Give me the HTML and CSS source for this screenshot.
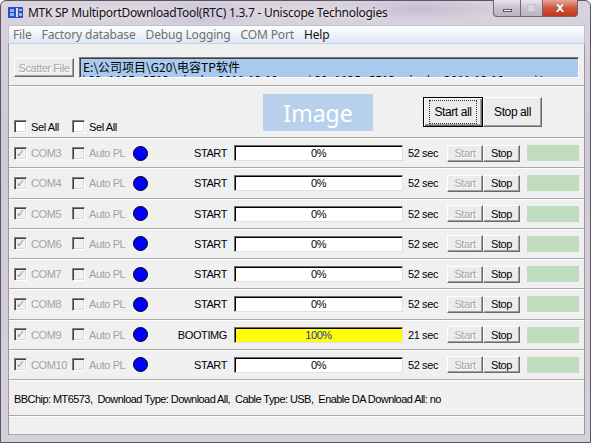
FILE: index.html
```html
<!DOCTYPE html>
<html>
<head>
<meta charset="utf-8">
<link rel="stylesheet" href="styles.css">
</head>
<body>
<div class="window">
  <div class="titlebar">
    <svg class="appicon" width="15" height="13" viewBox="0 0 15 13">
      <rect x="0" y="1" width="15" height="11" rx="1" fill="#2c4fb8"/>
      <rect x="2" y="3" width="4" height="3" fill="#8fb4ff"/>
      <rect x="2" y="7" width="4" height="3" fill="#8fb4ff"/>
      <rect x="8" y="2" width="2" height="9" fill="#cfe0ff"/>
      <rect x="11" y="3" width="3" height="2" fill="#8fb4ff"/>
      <rect x="11" y="7" width="3" height="3" fill="#8fb4ff"/>
    </svg>
    <span class="title">MTK SP MultiportDownloadTool(RTC) 1.3.7 - Uniscope Technologies</span>
    <div class="wbtns">
      <div class="wbtn min"><span class="minbar"></span></div>
      <div class="wbtn max"><span class="maxbox"></span></div>
      <div class="wbtn close"><span class="x">X</span></div>
    </div>
  </div>
  <div class="body">
    <div class="menubar">
      <span class="mi dis">File</span>
      <span class="mi dis">Factory database</span>
      <span class="mi dis">Debug Logging</span>
      <span class="mi dis">COM Port</span>
      <span class="mi">Help</span>
    </div>
    <div class="client">
      <div class="scatter">
        <div class="btn disabled scatterbtn">Scatter File</div>
        <div class="pathbox">
          <div class="pl">E:\公司项目\G20\电容TP软件</div>
          <div class="pl">\S0_1125_C512_ninglu_2011.12.10_user\S0_1125_C512_ninglu_2011.12.10_user\Images\MT6573_Android_scatter_emmc.txt</div>
        </div>
      </div>
      <div class="header">
        <label class="hcb"><span class="cb"></span><span>Sel All</span></label>
        <label class="hcb"><span class="cb"></span><span>Sel All</span></label>
        <div class="imagebox">Image</div>
        <div class="btn defbtn"><span class="focus">Start all</span></div>
        <div class="btn stopall">Stop all</div>
      </div>
      <div class="rows">
        <div class="row">
          <div class="c1"><span class="cb dis checked">✓</span><span class="g">COM3</span></div>
          <div class="c2"><span class="cb dis"></span><span class="g">Auto PL</span></div>
          <span class="dot"></span>
          <span class="st">START</span>
          <div class="prog"><span>0%</span></div>
          <span class="sec">52 sec</span>
          <div class="btn sm disabled">Start</div>
          <div class="btn sm">Stop</div>
          <div class="green"></div>
        </div>
        <div class="row">
          <div class="c1"><span class="cb dis checked">✓</span><span class="g">COM4</span></div>
          <div class="c2"><span class="cb dis"></span><span class="g">Auto PL</span></div>
          <span class="dot"></span>
          <span class="st">START</span>
          <div class="prog"><span>0%</span></div>
          <span class="sec">52 sec</span>
          <div class="btn sm disabled">Start</div>
          <div class="btn sm">Stop</div>
          <div class="green"></div>
        </div>
        <div class="row">
          <div class="c1"><span class="cb dis checked">✓</span><span class="g">COM5</span></div>
          <div class="c2"><span class="cb dis"></span><span class="g">Auto PL</span></div>
          <span class="dot"></span>
          <span class="st">START</span>
          <div class="prog"><span>0%</span></div>
          <span class="sec">52 sec</span>
          <div class="btn sm disabled">Start</div>
          <div class="btn sm">Stop</div>
          <div class="green"></div>
        </div>
        <div class="row">
          <div class="c1"><span class="cb dis checked">✓</span><span class="g">COM6</span></div>
          <div class="c2"><span class="cb dis"></span><span class="g">Auto PL</span></div>
          <span class="dot"></span>
          <span class="st">START</span>
          <div class="prog"><span>0%</span></div>
          <span class="sec">52 sec</span>
          <div class="btn sm disabled">Start</div>
          <div class="btn sm">Stop</div>
          <div class="green"></div>
        </div>
        <div class="row">
          <div class="c1"><span class="cb dis checked">✓</span><span class="g">COM7</span></div>
          <div class="c2"><span class="cb dis"></span><span class="g">Auto PL</span></div>
          <span class="dot"></span>
          <span class="st">START</span>
          <div class="prog"><span>0%</span></div>
          <span class="sec">52 sec</span>
          <div class="btn sm disabled">Start</div>
          <div class="btn sm">Stop</div>
          <div class="green"></div>
        </div>
        <div class="row">
          <div class="c1"><span class="cb dis checked">✓</span><span class="g">COM8</span></div>
          <div class="c2"><span class="cb dis"></span><span class="g">Auto PL</span></div>
          <span class="dot"></span>
          <span class="st">START</span>
          <div class="prog"><span>0%</span></div>
          <span class="sec">52 sec</span>
          <div class="btn sm disabled">Start</div>
          <div class="btn sm">Stop</div>
          <div class="green"></div>
        </div>
        <div class="row">
          <div class="c1"><span class="cb dis checked">✓</span><span class="g">COM9</span></div>
          <div class="c2"><span class="cb dis"></span><span class="g">Auto PL</span></div>
          <span class="dot"></span>
          <span class="st">BOOTIMG</span>
          <div class="prog full"><span>100%</span></div>
          <span class="sec">21 sec</span>
          <div class="btn sm disabled">Start</div>
          <div class="btn sm">Stop</div>
          <div class="green"></div>
        </div>
        <div class="row">
          <div class="c1"><span class="cb dis checked">✓</span><span class="g">COM10</span></div>
          <div class="c2"><span class="cb dis"></span><span class="g">Auto PL</span></div>
          <span class="dot"></span>
          <span class="st">START</span>
          <div class="prog"><span>0%</span></div>
          <span class="sec">52 sec</span>
          <div class="btn sm disabled">Start</div>
          <div class="btn sm">Stop</div>
          <div class="green"></div>
        </div>
      </div>
      <div class="info">BBChip: MT6573,&nbsp; Download Type: Download All,&nbsp; Cable Type: USB,&nbsp; Enable DA Download All: no</div>
      <div class="statusbar"></div>
    </div>
  </div>
</div>
</body>
</html>
```
FILE: styles.css
```css
* { box-sizing: border-box; }
html, body { margin: 0; padding: 0; }
body {
  width: 591px; height: 443px; overflow: hidden;
  font-family: "Liberation Sans", Arial, sans-serif;
  background: #fff;
}
.window {
  width: 591px; height: 443px;
  background:
    radial-gradient(ellipse 60px 14px at 200px 12px, rgba(150,140,200,0.35), transparent),
    radial-gradient(ellipse 90px 12px at 420px 8px, rgba(170,150,190,0.35), transparent),
    linear-gradient(180deg, #d9d3de 0%, #cfc8d6 30%, #d6d0da 100%);
  border: 1px solid #5a5560;
  border-radius: 6px 6px 0 0;
  display: flex; flex-direction: column;
}
.titlebar {
  height: 24px; flex: none;
  display: flex; align-items: center;
  padding-left: 7px;
  padding-bottom: 2px;
  position: relative;
}
.appicon { flex: none; margin-top: 1px; }
.title {
  margin-left: 5px;
  font-family: "Noto Sans", "Open Sans", sans-serif;
  font-size: 12px; color: #111;
  text-shadow: 0 0 6px rgba(255,255,255,0.9);
  letter-spacing: -0.27px;
}
.wbtns {
  position: absolute; right: 12px; top: -1px;
  display: flex;
}
.wbtn {
  height: 17px;
  border: 1px solid #6e6878;
  border-top: none;
  display: flex; align-items: center; justify-content: center;
}
.wbtn.min {
  width: 28px; border-radius: 0 0 0 4px;
  background: linear-gradient(180deg, #e8e4ec, #c9c3d1 50%, #b9b3c3);
}
.wbtn.max {
  width: 22px; border-left: none;
  background: linear-gradient(180deg, #e8e4ec, #c9c3d1 50%, #b9b3c3);
}
.wbtn.close {
  width: 35px; border-left: none; border-radius: 0 0 4px 0;
  background: linear-gradient(180deg, #e9a99a, #d0553d 50%, #c2351f);
}
.minbar { width: 9px; height: 3px; background: #fff; border: 1px solid #555; margin-top: 4px; }
.maxbox { width: 9px; height: 8px; border: 1px solid #c8c0cc; background: #d8d2dc; }
.x {
  color: #fff; font-family: "DejaVu Sans", sans-serif; font-weight: bold;
  font-size: 11px; text-shadow: 0 0 1px #444;
}
.body {
  flex: 1; display: flex; flex-direction: column;
  padding: 0 5px 7px 7px;
}
.menubar {
  height: 19px; flex: none;
  background: linear-gradient(180deg, #ffffff, #eef3fa 50%, #dde7f3);
  border: 1px solid #b9c4d2;
  border-bottom: 1px solid #c9d4e2;
  display: flex; align-items: center;
  padding-left: 4px;
  font-family: "Noto Sans", "Open Sans", sans-serif;
  font-size: 12px;
  letter-spacing: -0.15px;
}
.mi { margin-right: 10px; color: #111; }
.mi.dis { color: #707070; }
.client {
  flex: 1;
  background: #f0f0f0;
  border-left: 1px solid #9c97a2;
  border-right: 1px solid #9c97a2;
  display: flex; flex-direction: column;
  font-size: 11px; letter-spacing: -0.4px;
}
.scatter {
  height: 42px; flex: none;
  display: flex; align-items: flex-start;
  padding: 13px 0 0 5px;
  border-bottom: 1px solid #a9a9a9;
  box-shadow: 0 1px 0 #fff;
}
.btn {
  background: #ececec;
  border: 1px solid;
  border-color: #fff #6a6a6a #6a6a6a #fff;
  box-shadow: inset -1px -1px 0 #a0a0a0;
  display: flex; align-items: center; justify-content: center;
  color: #000;
  white-space: nowrap;
}
.btn.disabled { color: #a6a6a6; text-shadow: 1px 1px 0 #fff; }
.scatterbtn { width: 60px; height: 19px; margin-top: 1px; }
.pathbox {
  margin-left: 5px;
  width: 500px; height: 21px;
  background: #a7caee;
  border: 1px solid;
  border-color: #7a7a7a #fff #fff #7a7a7a;
  box-shadow: inset 1px 1px 0 #404040;
  overflow: hidden;
  padding: 2px 0 0 3px;
  font-family: "Noto Sans CJK SC", "Liberation Sans", sans-serif;
  font-size: 12px; letter-spacing: 0;
  line-height: 13px;
  color: #000;
}
.pl { white-space: nowrap; }
.header {
  height: 52px; flex: none;
  display: flex; align-items: flex-start;
  padding-left: 5px;
  border-bottom: 1px solid #a9a9a9;
}
.hcb {
  display: flex; align-items: center;
  margin-top: 34px;
  width: 58px;
  color: #000;
}
.cb {
  width: 13px; height: 13px; flex: none;
  background: #fff;
  border: 1px solid;
  border-color: #808080 #fff #fff #808080;
  box-shadow: inset 1px 1px 0 #404040, inset -1px -1px 0 #dcdcdc;
  margin-right: 4px;
  font-size: 11px; line-height: 11px; text-align: center;
  color: #999; font-family: "DejaVu Sans", sans-serif; letter-spacing: 0;
  font-weight: bold;
}
.cb.dis { background: #f0f0f0; }
.imagebox {
  margin-left: 133px; margin-top: 8px;
  width: 110px; height: 37px;
  background: #b7d1ed;
  color: #fff;
  font-family: "Noto Sans", "Open Sans", sans-serif;
  font-size: 23px; letter-spacing: 0;
  display: flex; align-items: center; justify-content: center;
}
.defbtn {
  margin-left: 50px; margin-top: 11px;
  width: 60px; height: 30px;
  border: 1px solid #000;
  box-shadow: inset 1px 1px 0 #fff, inset -1px -1px 0 #6a6a6a, inset -2px -2px 0 #a0a0a0;
  font-size: 12px;
}
.focus { border: 1px dotted #333; padding: 4px 4px; }
.stopall {
  margin-top: 11px;
  width: 59px; height: 30px;
  font-size: 12px;
}
.rows { flex: none; }
.row {
  height: 30.25px;
  display: grid;
  grid-template-columns: 58px 61px 15px 79px 176px 44px 36px 37px 59px;
  column-gap: 0;
  align-items: center;
  padding-left: 5px;
  border-top: 1px solid #fff;
  border-bottom: 1px solid #a9a9a9;
}
.c1, .c2 { display: flex; align-items: center; }
.g { color: #a3a3a3; }
.dot {
  width: 15px; height: 15px;
  border-radius: 50%;
  background: #0000ff;
  border: 1px solid #000;
}
.st { text-align: right; color: #000; }
.prog {
  margin-left: 7px;
  height: 16px;
  background: #fff;
  border: 1px solid;
  border-color: #6d6d6d #e0e0e0 #e0e0e0 #6d6d6d;
  box-shadow: inset 1px 1px 0 #000;
  display: flex; align-items: center; justify-content: center;
  color: #000;
  width: 169px;
}
.prog.full { background: #ffff00; color: #1a2fc8; }
.sec { padding-left: 5px; color: #000; }
.btn.sm { height: 17px; margin-top: 0; }
.green {
  margin-left: 7px;
  width: 52px; height: 16px;
  background: #bfdcbf;
}
.info {
  height: 36px; flex: none;
  display: flex; align-items: center;
  padding-left: 5px;
  padding-top: 2px;
  border-top: 1px solid #fff;
  border-bottom: 1px solid #a9a9a9;
  color: #000;
  letter-spacing: -0.56px;
}
.statusbar {
  flex: 1;
  border-top: 1px solid #fff;
  border-bottom: 1px solid #a9a9a9;
}
```
